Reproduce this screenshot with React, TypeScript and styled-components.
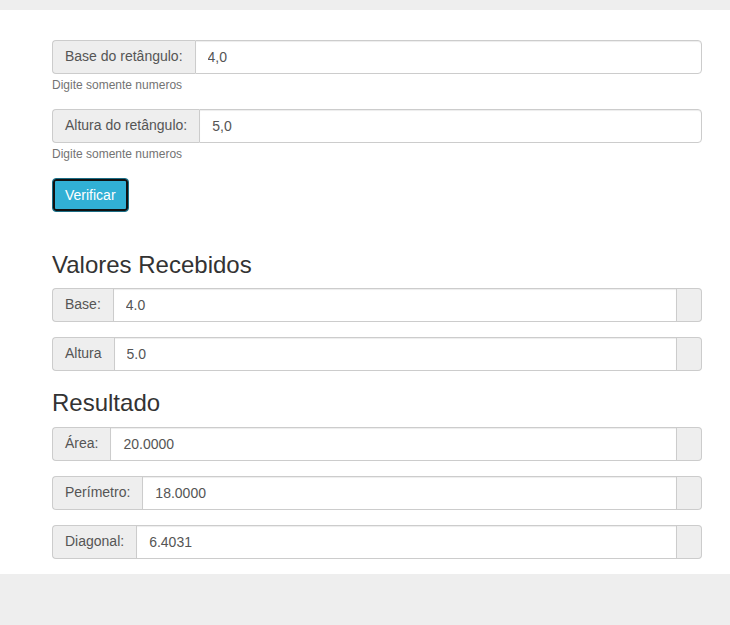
import React from "react";
import styled, { createGlobalStyle } from "styled-components";

const Global = createGlobalStyle`
  html, body {
    margin: 0;
    padding: 0;
    background: #eeeeee;
    font-family: "Liberation Sans", Helvetica, Arial, sans-serif;
    font-size: 14px;
    line-height: 1.42857;
    color: #333;
  }
  * { box-sizing: border-box; }
`;

const TopStrip = styled.div`
  height: 10px;
  background: #eeeeee;
`;

const Panel = styled.main`
  background: #ffffff;
  padding: 30px 28px 0 52px;
  display: flow-root;
`;

const Form = styled.form`
  display: flex;
  flex-direction: column;
  padding-bottom: 20px;
`;

const FormGroup = styled.div<{ $mb?: number }>`
  margin-bottom: ${(p) => (p.$mb ?? 15)}px;
`;

const InputGroup = styled.div`
  display: flex;
  height: 34px;
  width: 100%;
`;

const Addon = styled.span<{ $last?: boolean }>`
  display: flex;
  align-items: center;
  padding: 6px 12px;
  background: #eeeeee;
  color: #555555;
  font-size: 14px;
  white-space: nowrap;
  border: 1px solid #cccccc;
  ${(p) =>
    p.$last
      ? `border-left: 0; border-radius: 0 4px 4px 0; width: 25px;`
      : `border-right: 0; border-radius: 4px 0 0 4px;`}
`;

const Field = styled.input<{ $end?: boolean }>`
  flex: 1;
  min-width: 0;
  height: 34px;
  padding: 6px 12px;
  font-family: inherit;
  font-size: 14px;
  color: #555555;
  background: #ffffff;
  border: 1px solid #cccccc;
  border-radius: ${(p) => (p.$end ? "0 4px 4px 0" : "0")};
  box-shadow: inset 0 1px 1px rgba(0, 0, 0, 0.075);
  outline: none;
`;

const Help = styled.span`
  display: block;
  margin-top: 3px;
  font-size: 12px;
  line-height: 17px;
  color: #737373;
`;

const Button = styled.button`
  align-self: flex-start;
  height: 34px;
  padding: 6px 12px;
  font-family: inherit;
  font-size: 14px;
  line-height: 20px;
  color: #ffffff;
  background: #31b0d5;
  border: 1px solid #1b6d85;
  border-radius: 4px;
  box-shadow: inset 0 0 0 2px #111111;
  cursor: pointer;
`;

const Heading = styled.h3<{ $mt?: number }>`
  margin: ${(p) => p.$mt ?? 20}px 0 10px;
  font-size: 24px;
  font-weight: 500;
  line-height: 1.1;
  color: #333333;
`;

const BottomStrip = styled.div`
  height: 51px;
  background: #eeeeee;
`;

type EditProps = { label: string; value: string; mb?: number };

const EditRow = ({ label, value, mb }: EditProps) => (
  <FormGroup $mb={mb}>
    <InputGroup>
      <Addon>{label}</Addon>
      <Field $end defaultValue={value} />
    </InputGroup>
    <Help>Digite somente numeros</Help>
  </FormGroup>
);

const ReadRow = ({ label, value }: { label: string; value: string }) => (
  <FormGroup>
    <InputGroup>
      <Addon>{label}</Addon>
      <Field readOnly defaultValue={value} />
      <Addon $last />
    </InputGroup>
  </FormGroup>
);

export default function App() {
  return (
    <>
      <Global />
      <TopStrip />
      <Panel>
        <Form onSubmit={(e) => e.preventDefault()}>
          <EditRow label="Base do retângulo:" value="4,0" />
          <EditRow label="Altura do retângulo:" value="5,0" />
          <Button type="submit">Verificar</Button>
        </Form>
        <Heading>Valores Recebidos</Heading>
        <ReadRow label="Base:" value="4.0" />
        <ReadRow label="Altura" value="5.0" />
        <Heading $mt={19}>Resultado</Heading>
        <ReadRow label="Área:" value="20.0000" />
        <ReadRow label="Perímetro:" value="18.0000" />
        <ReadRow label="Diagonal:" value="6.4031" />
      </Panel>
      <BottomStrip />
    </>
  );
}
